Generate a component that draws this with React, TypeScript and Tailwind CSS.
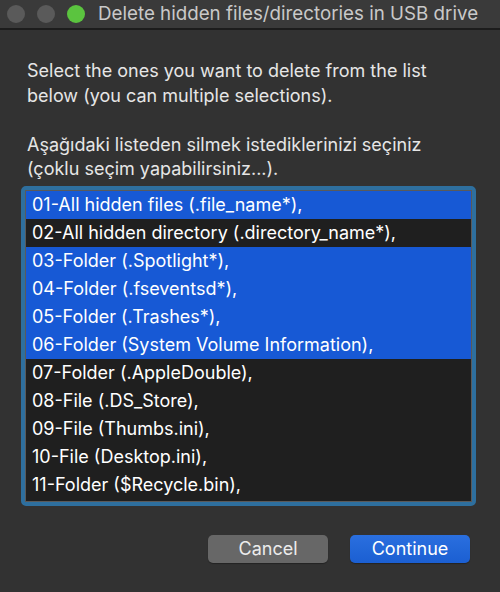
import React, { useState } from "react";

const items = [
  "01-All hidden files (.file_name*),",
  "02-All hidden directory (.directory_name*),",
  "03-Folder (.Spotlight*),",
  "04-Folder (.fseventsd*),",
  "05-Folder (.Trashes*),",
  "06-Folder (System Volume Information),",
  "07-Folder (.AppleDouble),",
  "08-File (.DS_Store),",
  "09-File (Thumbs.ini),",
  "10-File (Desktop.ini),",
  "11-Folder ($Recycle.bin),",
];

const App: React.FC = () => {
  const [selected, setSelected] = useState<number[]>([0, 2, 3, 4, 5]);

  const toggle = (idx: number) => {
    setSelected((prev) =>
      prev.includes(idx) ? prev.filter((i) => i !== idx) : [...prev, idx]
    );
  };

  return (
    <div
      className="w-[500px] h-[592px] flex flex-col bg-[#323232] overflow-hidden"
      style={{ fontFamily: "Inter, 'Open Sans', sans-serif" }}
    >
      {/* title bar */}
      <div className="h-[30px] flex items-center bg-[#3a3a3a] border-b-2 border-[#1c1c1c] pl-[7px]">
        <div className="flex gap-[12px]">
          <span className="w-[18px] h-[18px] rounded-full bg-[#5a5a5a]" />
          <span className="w-[18px] h-[18px] rounded-full bg-[#5a5a5a]" />
          <span className="w-[18px] h-[18px] rounded-full bg-[#5bc43f]" />
        </div>
        <div className="ml-[13px] text-[18.75px] text-[#c9c9c9] whitespace-nowrap">
          Delete hidden files/directories in USB drive
        </div>
      </div>

      {/* body */}
      <div className="flex flex-col px-[21px] pt-[29px]">
        <p className="pl-[6px] text-[18px] leading-[24.5px] text-[#e6e6e6] whitespace-nowrap">
          Select the ones you want to delete from the list
          <br />
          below (you can multiple selections).
          <br />
          <br />
          Aşağıdaki listeden silmek istediklerinizi seçiniz
          <br />
          (çoklu seçim yapabilirsiniz...).
        </p>

        <div className="mt-[4px] w-[455px] h-[320px] rounded-[5px] border-[4px] border-[#2e6f9e]">
          <div className="h-full border border-[#5a5a5a] bg-[#1f1f1f] overflow-hidden">
            {items.map((item, idx) => (
              <div
                key={item}
                onClick={() => toggle(idx)}
                className={
                  "h-[28px] flex items-center pl-[6px] text-[18px] text-white whitespace-nowrap " +
                  (selected.includes(idx) ? "bg-[#1759d5]" : "bg-[#1f1f1f]")
                }
              >
                {item}
              </div>
            ))}
          </div>
        </div>

        <div className="flex justify-end gap-[22px] mt-[29px] pr-[9px]">
          <button className="w-[120px] h-[28px] rounded-[5px] bg-[#676767] text-[18px] text-[#ececec] shadow-[0_1px_1px_rgba(0,0,0,0.3)]">
            Cancel
          </button>
          <button className="w-[120px] h-[28px] rounded-[5px] bg-gradient-to-b from-[#2a6fdf] to-[#1b5fd2] text-[18px] text-white shadow-[0_1px_1px_rgba(0,0,0,0.3)]">
            Continue
          </button>
        </div>
      </div>
    </div>
  );
};

export default App;
